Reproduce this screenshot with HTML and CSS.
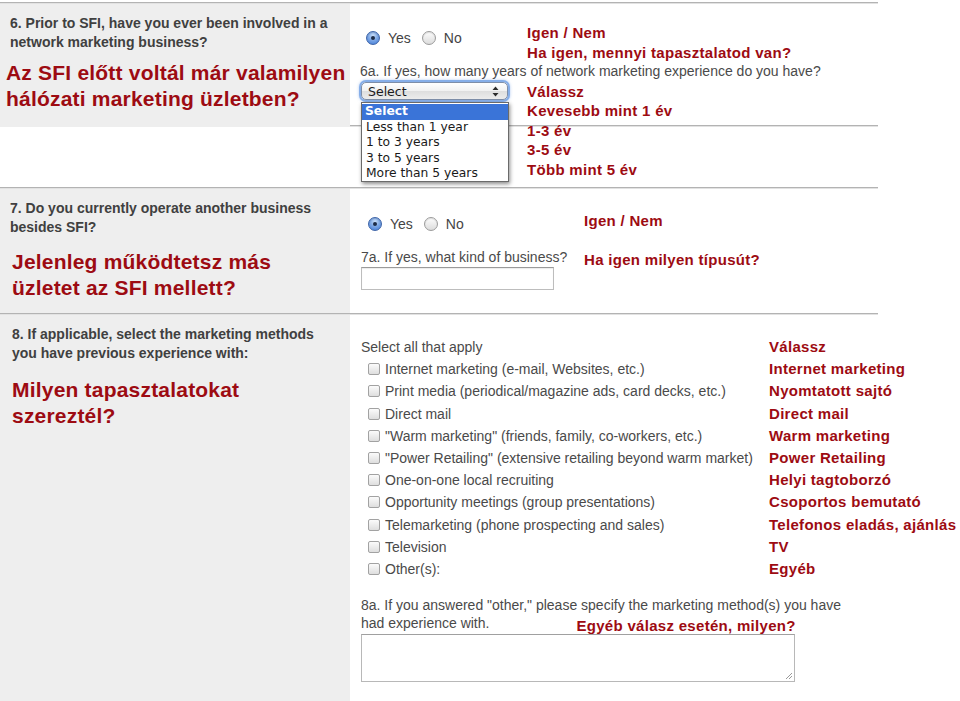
FILE: index.html
```html
<!DOCTYPE html>
<html lang="hu">
<head>
<meta charset="utf-8">
<title>SFI kérdőív</title>
<link rel="stylesheet" href="styles.css">
</head>
<body>
<div class="form">
  <section class="row row-6">
    <div class="side">
      <p class="q-en">6. Prior to SFI, have you ever been involved in a<br>network marketing business?</p>
      <p class="q-hu q-hu-6">Az SFI előtt voltál már valamilyen<br>hálózati marketing üzletben?</p>
    </div>
    <div class="main stack">
      <div class="fields fields-6">
        <div class="radios">
          <span class="radio on"></span><span class="rlabel">Yes</span>
          <span class="radio"></span><span class="rlabel">No</span>
        </div>
        <p class="label label-6a">6a. If yes, how many years of network marketing experience do you have?</p>
        <div class="select-wrap">
          <div class="select">
            <span class="select-text">Select</span>
            <svg class="select-arrows" width="7" height="11" viewBox="0 0 7 11"><path d="M3.5 0.5 L6.5 4 L0.5 4 Z M0.5 7 L6.5 7 L3.5 10.5 Z" fill="#2b2b2b"/></svg>
          </div>
          <ul class="menu">
            <li class="menu-item active">Select</li>
            <li class="menu-item">Less than 1 year</li>
            <li class="menu-item">1 to 3 years</li>
            <li class="menu-item">3 to 5 years</li>
            <li class="menu-item">More than 5 years</li>
          </ul>
        </div>
      </div>
      <div class="notes notes-6">
        <p>Igen / Nem</p>
        <p>Ha igen, mennyi tapasztalatod van?</p>
        <p>&nbsp;</p>
        <p>Válassz</p>
        <p>Kevesebb mint 1 év</p>
        <p>1-3 év</p>
        <p>3-5 év</p>
        <p>Több mint 5 év</p>
      </div>
    </div>
  </section>

  <section class="row row-spacer">
    <div class="side side-blank"></div>
    <div class="main"></div>
  </section>

  <section class="row row-7">
    <div class="side">
      <p class="q-en">7. Do you currently operate another business<br>besides SFI?</p>
      <p class="q-hu q-hu-7">Jelenleg működtetsz más<br>üzletet az SFI mellett?</p>
    </div>
    <div class="main stack">
      <div class="fields fields-7">
        <div class="radios radios-7">
          <span class="radio on"></span><span class="rlabel">Yes</span>
          <span class="radio"></span><span class="rlabel">No</span>
        </div>
        <p class="label label-7a">7a. If yes, what kind of business?</p>
        <div class="textbox"></div>
      </div>
      <div class="notes notes-7">
        <p>Igen / Nem</p>
        <p>&nbsp;</p>
        <p>Ha igen milyen típusút?</p>
      </div>
    </div>
  </section>

  <section class="row row-8">
    <div class="side side-8">
      <p class="q-en">8. If applicable, select the marketing methods<br>you have previous experience with:</p>
      <p class="q-hu q-hu-8">Milyen tapasztalatokat<br>szereztél?</p>
    </div>
    <div class="main main-8">
      <div class="checks-grid">
        <ul class="checks">
          <li class="checks-head">Select all that apply</li>
          <li><span class="check"></span>Internet marketing (e-mail, Websites, etc.)</li>
          <li><span class="check"></span>Print media (periodical/magazine ads, card decks, etc.)</li>
          <li><span class="check"></span>Direct mail</li>
          <li><span class="check"></span>"Warm marketing" (friends, family, co-workers, etc.)</li>
          <li><span class="check"></span>"Power Retailing" (extensive retailing beyond warm market)</li>
          <li><span class="check"></span>One-on-one local recruiting</li>
          <li><span class="check"></span>Opportunity meetings (group presentations)</li>
          <li><span class="check"></span>Telemarketing (phone prospecting and sales)</li>
          <li><span class="check"></span>Television</li>
          <li><span class="check"></span>Other(s):</li>
        </ul>
        <ul class="notes-list">
          <li>Válassz</li>
          <li>Internet marketing</li>
          <li>Nyomtatott sajtó</li>
          <li>Direct mail</li>
          <li>Warm marketing</li>
          <li>Power Retailing</li>
          <li>Helyi tagtoborzó</li>
          <li>Csoportos bemutató</li>
          <li>Telefonos eladás, ajánlás</li>
          <li>TV</li>
          <li>Egyéb</li>
        </ul>
      </div>
      <p class="label label-8a">8a. If you answered "other," please specify the marketing method(s) you have<br>had experience with.<span class="note-inline">Egyéb válasz esetén, milyen?</span></p>
      <div class="textarea">
        <svg class="grip" width="8" height="8" viewBox="0 0 8 8"><path d="M7 1 L1 7 M7 4 L4 7" stroke="#9a9a9a" stroke-width="1"/></svg>
      </div>
    </div>
  </section>
</div>
</body>
</html>
```

FILE: styles.css
```css
* { box-sizing: border-box; }
html, body { margin: 0; padding: 0; background: #ffffff; }
body {
  font-family: "Liberation Sans", Arial, Helvetica, sans-serif;
  color: #4a4a4a;
  overflow: hidden;
  height: 701px;
}
p { margin: 0; }
ul { margin: 0; padding: 0; list-style: none; }

.form {
  width: 878px;
  padding-top: 2px;
}

.row {
  display: grid;
  grid-template-columns: 352px 1fr;
  border-top: 1px solid #b3b3b3;
  box-shadow: inset 0 1px 0 #e2e2e2;
}

.side {
  background: #eeeeee;
  margin-right: 2px;
  padding: 10px 8px 0 10px;
  margin-top: 1px;
}
.side-blank { background: #ffffff; }

.q-en {
  font-weight: bold;
  font-size: 14px;
  line-height: 19px;
  color: #404040;
}
.q-hu {
  font-weight: bold;
  font-size: 21px;
  line-height: 26px;
  letter-spacing: 0.2px;
  color: #9d0b12;
  white-space: nowrap;
}
.q-hu-6 { margin: 8px 0 0 -4px; }
.q-hu-7 { margin: 12px 0 0 2px; }
.q-hu-8 { margin: 14px 0 0 0; }

.row-6 { height: 123px; }
.row-spacer { height: 62px; }
.row-7 { height: 126px; }
.row-8 { height: 390px; }
.side-8 { padding-left: 12px; }

.main { position: relative; }
.stack { display: grid; }
.stack > * { grid-area: 1 / 1; }

.fields { padding-left: 8px; }
.fields-6 { padding-top: 25px; }
.fields-7 { padding-top: 26px; }

.radios {
  display: flex;
  align-items: center;
  height: 20px;
  font-size: 14px;
  padding-left: 6px;
}
.radios-7 { padding-left: 8px; }
.radio {
  width: 14px;
  height: 14px;
  border-radius: 50%;
  border: 1px solid #9b9b9b;
  background: linear-gradient(#fdfdfd, #dcdcdc);
  box-shadow: inset 0 1px 1px rgba(0,0,0,0.12);
  flex: none;
  position: relative;
}
.radio.on {
  border-color: #3d64a8;
  background: radial-gradient(circle at 50% 30%, #c9def8 0%, #7fa9e6 45%, #3d78d6 100%);
}
.radio.on::after {
  content: "";
  position: absolute;
  left: 4px;
  top: 4px;
  width: 4px;
  height: 4px;
  border-radius: 50%;
  background: #1d2c47;
}
.rlabel {
  margin: 0 11px 0 8px;
  color: #444444;
}

.label {
  font-size: 14px;
  line-height: 18px;
  color: #4a4a4a;
  white-space: nowrap;
}
.label-6a { margin-top: 14px; }
.label-7a { margin-top: 14px; margin-left: 1px; }

.select-wrap {
  position: relative;
  margin-top: 2px;
  margin-left: 1px;
  width: 147px;
}
.select {
  height: 18px;
  border: 1px solid #7e8ea8;
  border-radius: 5px;
  background: linear-gradient(#ffffff, #f1f1f1 50%, #dedede 51%, #ececec);
  box-shadow: 0 0 0 2px #86aee8, 0 0 3px 2px rgba(100,150,230,0.5);
  display: flex;
  align-items: center;
  justify-content: space-between;
  padding: 0 8px 0 6px;
}
.select-text {
  font-family: "DejaVu Sans", "Liberation Sans", sans-serif;
  font-size: 12.5px;
  color: #1b1b1b;
}
.menu {
  position: absolute;
  left: 0;
  top: 20px;
  width: 148px;
  height: 80px;
  background: #ffffff;
  border: 1px solid #6a6a6a;
  box-shadow: 1px 2px 4px rgba(0,0,0,0.45);
  padding-top: 1px;
  font-family: "DejaVu Sans", "Liberation Sans", sans-serif;
  font-size: 12.3px;
  color: #1a1a1a;
}
.menu-item {
  height: 15.5px;
  line-height: 15.5px;
  padding-left: 4px;
  white-space: nowrap;
}
.menu-item.active {
  background: #3a74d8;
  color: #ffffff;
  font-weight: bold;
  padding-left: 3px;
}

.textbox {
  margin-top: 1px;
  margin-left: 1px;
  width: 193px;
  height: 23px;
  border: 1px solid #bdbdbd;
  border-top-color: #9a9a9a;
  box-shadow: inset 0 1px 1px rgba(0,0,0,0.08);
  background: #ffffff;
}

.notes {
  color: #9d0b12;
  font-weight: bold;
  font-size: 15px;
  letter-spacing: 0.3px;
  line-height: 19.5px;
  white-space: nowrap;
  pointer-events: none;
}
.notes-6 { margin-left: 175px; padding-top: 20px; }
.notes-7 { margin-left: 232px; padding-top: 23px; }

.main-8 { padding: 22px 0 0 9px; }
.checks-grid {
  display: grid;
  grid-template-columns: 408px auto;
}
.checks li {
  height: 22.2px;
  line-height: 22.2px;
  font-size: 14px;
  color: #4a4a4a;
  white-space: nowrap;
  display: flex;
  align-items: center;
  padding-left: 7px;
}
.checks li.checks-head { padding-left: 0; }
.check {
  width: 12px;
  height: 12px;
  border: 1px solid #a2a2a2;
  border-radius: 2px;
  background: linear-gradient(#fbfbfb, #dedede);
  margin-right: 5px;
  flex: none;
}
.notes-list li {
  height: 22.2px;
  line-height: 22.2px;
  color: #9d0b12;
  font-weight: bold;
  font-size: 15px;
  letter-spacing: 0.3px;
  white-space: nowrap;
}

.label-8a { margin-top: 16px; }
.note-inline {
  color: #9d0b12;
  font-weight: bold;
  font-size: 15px;
  letter-spacing: 0.3px;
  margin-left: 87px;
  line-height: 0;
  vertical-align: -3px;
}
.textarea {
  position: relative;
  margin-top: 2px;
  width: 434px;
  height: 48px;
  border: 1px solid #b8b8b8;
  border-top-color: #a0a0a0;
  background: #ffffff;
}
.grip {
  position: absolute;
  right: 1px;
  bottom: 1px;
}
```
